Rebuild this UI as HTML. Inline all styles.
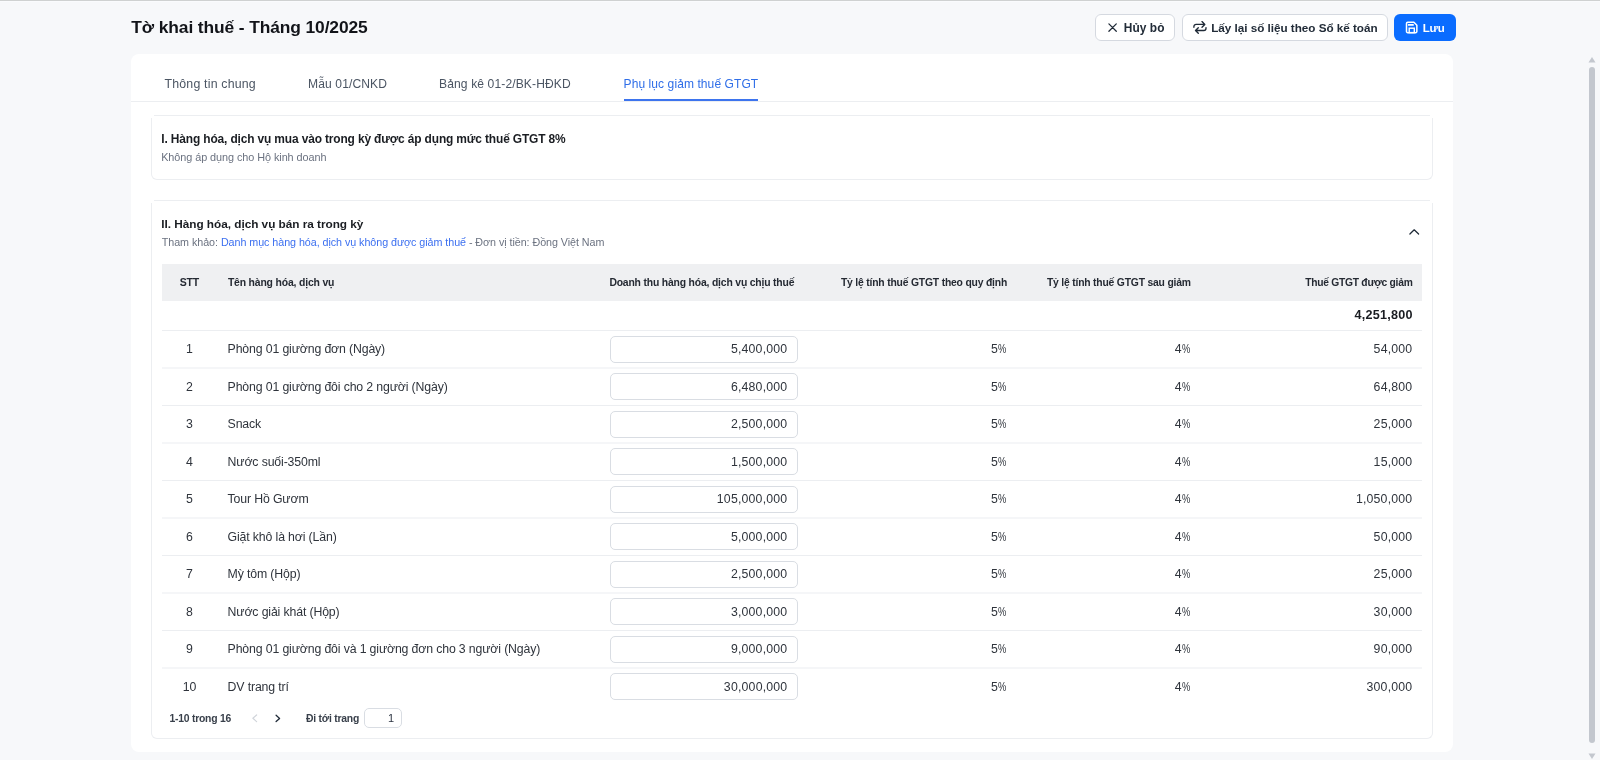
<!DOCTYPE html>
<html lang="vi"><head><meta charset="utf-8"><title>Tờ khai thuế - Tháng 10/2025</title>
<style>
html,body{margin:0;padding:0;}
body{width:1600px;height:760px;overflow:hidden;position:relative;background:#f7f8fa;will-change:transform;font-family:"Liberation Sans", sans-serif;}
</style></head><body>
<div style="position:absolute;left:0px;top:0px;width:1600px;height:1px;background:#cfd1d1;"></div>
<div style="position:absolute;left:0px;top:1px;width:1600px;height:1px;background:#fafbfd;"></div>
<div style="position:absolute;top:16px;left:131.33px;font-size:17.4px;line-height:23px;font-weight:700;color:#121419;white-space:nowrap;letter-spacing:-0.114px;">Tờ khai thuế - Tháng 10/2025</div>
<div style="position:absolute;left:1095px;top:14px;width:80px;height:27px;box-sizing:border-box;border:1px solid #d5d9e0;border-radius:6px;background:#fff;"></div>
<svg style="position:absolute;left:1107px;top:22px" width="11" height="11" viewBox="0 0 11 11"><path d="M1.9 1.9L9.3 9.3M9.3 1.9L1.9 9.3" stroke="#1f2a37" stroke-width="1.25" stroke-linecap="round"/></svg>
<div style="position:absolute;top:21px;left:1123.79px;font-size:11.91px;line-height:15px;font-weight:700;color:#222c38;white-space:nowrap;letter-spacing:0.063px;">Hủy bỏ</div>
<div style="position:absolute;left:1182px;top:14px;width:206px;height:27px;box-sizing:border-box;border:1px solid #d5d9e0;border-radius:6px;background:#fff;"></div>
<svg style="position:absolute;left:1190px;top:19px" width="20" height="17" viewBox="0 0 20 17"><path d="M3.9 8.3V7.6a2.2 2.2 0 0 1 2.2-2.2H14.6M12 2.6l2.8 2.8L12 8.2M16 8.6v0.7a2.2 2.2 0 0 1-2.2 2.2H5.6M8.3 8.7l-2.8 2.8 2.8 2.8" fill="none" stroke="#1f2a37" stroke-width="1.35" stroke-linecap="round" stroke-linejoin="round"/></svg>
<div style="position:absolute;top:20px;left:1211.20px;font-size:11.71px;line-height:15px;font-weight:700;color:#222c38;white-space:nowrap;letter-spacing:-0.024px;">Lấy lại số liệu theo Sổ kế toán</div>
<div style="position:absolute;left:1394px;top:14px;width:62px;height:27px;border-radius:6px;background:#0a6cff;"></div>
<svg style="position:absolute;left:1402px;top:18px" width="20" height="19" viewBox="0 0 20 19"><path d="M5.7 4.25H11.9L14.85 7.2V13.45a1.2 1.2 0 0 1-1.2 1.2H5.7a1.2 1.2 0 0 1-1.2-1.2V5.45a1.2 1.2 0 0 1 1.2-1.2z" fill="none" stroke="#fff" stroke-width="1.5" stroke-linejoin="round"/><rect x="5.9" y="5.9" width="5.9" height="1.9" rx="0.5" fill="#fff"/><rect x="7.2" y="10.2" width="5.1" height="4.4" fill="none" stroke="#fff" stroke-width="1.4"/></svg>
<div style="position:absolute;top:21px;left:1422.81px;font-size:11.47px;line-height:15px;font-weight:700;color:#ffffff;white-space:nowrap;letter-spacing:-0.188px;">Lưu</div>
<div style="position:absolute;left:131px;top:54px;width:1322px;height:698px;background:#fff;border-radius:8px;"></div>
<div style="position:absolute;top:76px;left:164.50px;font-size:12.35px;line-height:16px;font-weight:400;color:#4b5563;white-space:nowrap;letter-spacing:0.192px;">Thông tin chung</div>
<div style="position:absolute;top:76px;left:308.03px;font-size:12.07px;line-height:16px;font-weight:400;color:#4b5563;white-space:nowrap;letter-spacing:0.122px;">Mẫu 01/CNKD</div>
<div style="position:absolute;top:76px;left:439.03px;font-size:12.08px;line-height:16px;font-weight:400;color:#4b5563;white-space:nowrap;letter-spacing:0.113px;">Bảng kê 01-2/BK-HĐKD</div>
<div style="position:absolute;top:76px;left:623.54px;font-size:12.02px;line-height:16px;font-weight:400;color:#2f6ee8;white-space:nowrap;letter-spacing:0.084px;">Phụ lục giảm thuế GTGT</div>
<div style="position:absolute;left:131px;top:101px;width:1322px;height:1px;background:#eceef1;"></div>
<div style="position:absolute;left:624px;top:99px;width:134px;height:2px;background:#3d74ee;"></div>
<div style="position:absolute;left:151px;top:118px;width:1282px;height:62px;box-sizing:border-box;border:1px solid #eceef1;border-top:0;border-radius:0 0 6px 6px;"></div>
<div style="position:absolute;left:154px;top:115px;width:1276px;height:1px;background:#eceef1;"></div>
<div style="position:absolute;top:131px;left:161.28px;font-size:11.94px;line-height:16px;font-weight:700;color:#1a1d22;white-space:nowrap;letter-spacing:-0.142px;">I. Hàng hóa, dịch vụ mua vào trong kỳ được áp dụng mức thuế GTGT 8%</div>
<div style="position:absolute;top:150px;left:161.13px;font-size:10.87px;line-height:14px;font-weight:400;color:#6b7280;white-space:nowrap;letter-spacing:-0.063px;">Không áp dụng cho Hộ kinh doanh</div>
<div style="position:absolute;left:151px;top:203px;width:1282px;height:536px;box-sizing:border-box;border:1px solid #eceef1;border-top:0;border-radius:0 0 6px 6px;"></div>
<div style="position:absolute;left:154px;top:200px;width:1276px;height:1px;background:#eceef1;"></div>
<div style="position:absolute;top:217px;left:161.29px;font-size:11.81px;line-height:15px;font-weight:700;color:#1a1d22;white-space:nowrap;letter-spacing:-0.032px;">II. Hàng hóa, dịch vụ bán ra trong kỳ</div>
<div style="position:absolute;top:235px;left:161.79px;font-size:10.74px;line-height:14px;font-weight:400;color:#6b7280;white-space:nowrap;letter-spacing:-0.052px;">Tham khảo: <span style="color:#3b6ff0">Danh mục hàng hóa, dịch vụ không được giảm thuế</span> - Đơn vị tiền: Đồng Việt Nam</div>
<svg style="position:absolute;left:1408px;top:228px" width="12" height="8" viewBox="0 0 12 8"><path d="M1.9 6L6.2 1.8L10.6 6" fill="none" stroke="#1f2a37" stroke-width="1.25" stroke-linecap="round" stroke-linejoin="round"/></svg>
<div style="position:absolute;left:162px;top:264px;width:1260px;height:37px;background:#eff0f2;"></div>
<div style="position:absolute;top:275px;left:179.68px;font-size:10.52px;line-height:14px;font-weight:700;color:#252a33;white-space:nowrap;letter-spacing:-0.231px;">STT</div>
<div style="position:absolute;top:276px;left:227.90px;font-size:10.41px;line-height:14px;font-weight:700;color:#252a33;white-space:nowrap;letter-spacing:-0.167px;">Tên hàng hóa, dịch vụ</div>
<div style="position:absolute;top:276px;left:609.38px;font-size:10.39px;line-height:14px;font-weight:700;color:#252a33;white-space:nowrap;letter-spacing:-0.174px;">Doanh thu hàng hóa, dịch vụ chịu thuế</div>
<div style="position:absolute;top:276px;left:840.90px;font-size:10.35px;line-height:13px;font-weight:700;color:#252a33;white-space:nowrap;letter-spacing:-0.182px;">Tỷ lệ tính thuế GTGT theo quy định</div>
<div style="position:absolute;top:276px;left:1046.90px;font-size:10.35px;line-height:13px;font-weight:700;color:#252a33;white-space:nowrap;letter-spacing:-0.19px;">Tỷ lệ tính thuế GTGT sau giảm</div>
<div style="position:absolute;top:276px;left:1305.30px;font-size:10.26px;line-height:13px;font-weight:700;color:#252a33;white-space:nowrap;letter-spacing:-0.257px;">Thuế GTGT được giảm</div>
<div style="position:absolute;top:307px;left:1354.62px;font-size:12.6px;line-height:16px;font-weight:700;color:#1a1d22;white-space:nowrap;letter-spacing:0.226px;">4,251,800</div>
<div style="position:absolute;left:162px;top:330px;width:1260px;height:1px;background:#eceef1;"></div>
<div style="position:absolute;top:341px;left:-110.5px;width:600px;text-align:center;font-size:12.3px;line-height:16px;font-weight:400;color:#2f343c;white-space:nowrap;">1</div>
<div style="position:absolute;top:341px;left:227.6px;font-size:12.3px;line-height:16px;font-weight:400;color:#2f343c;white-space:nowrap;letter-spacing:-0.14px;">Phòng 01 giường đơn (Ngày)</div>
<div style="position:absolute;left:610px;top:336px;width:188px;height:27px;box-sizing:border-box;border:1px solid #d9dde3;border-radius:5px;background:#fff;"></div>
<div style="position:absolute;top:341px;right:812.60px;font-size:12.3px;line-height:16px;font-weight:400;color:#2f343c;white-space:nowrap;letter-spacing:0.2px;">5,400,000</div>
<div style="position:absolute;top:341px;left:991.0px;font-size:12.3px;line-height:16px;font-weight:400;color:#2f343c;white-space:nowrap;">5<span style="display:inline-block;transform:scaleX(.76);transform-origin:0 0;margin-left:0.6px">%</span></div>
<div style="position:absolute;top:341px;left:1174.7px;font-size:12.3px;line-height:16px;font-weight:400;color:#2f343c;white-space:nowrap;">4<span style="display:inline-block;transform:scaleX(.76);transform-origin:0 0;margin-left:0.6px">%</span></div>
<div style="position:absolute;top:341px;right:187.60px;font-size:12.3px;line-height:16px;font-weight:400;color:#2f343c;white-space:nowrap;letter-spacing:0.2px;">54,000</div>
<div style="position:absolute;left:162px;top:367px;width:1260px;height:2px;background:#f5f6f8;"></div>
<div style="position:absolute;top:379px;left:-110.5px;width:600px;text-align:center;font-size:12.3px;line-height:16px;font-weight:400;color:#2f343c;white-space:nowrap;">2</div>
<div style="position:absolute;top:379px;left:227.6px;font-size:12.3px;line-height:16px;font-weight:400;color:#2f343c;white-space:nowrap;letter-spacing:-0.14px;">Phòng 01 giường đôi cho 2 người (Ngày)</div>
<div style="position:absolute;left:610px;top:373px;width:188px;height:27px;box-sizing:border-box;border:1px solid #d9dde3;border-radius:5px;background:#fff;"></div>
<div style="position:absolute;top:379px;right:812.60px;font-size:12.3px;line-height:16px;font-weight:400;color:#2f343c;white-space:nowrap;letter-spacing:0.2px;">6,480,000</div>
<div style="position:absolute;top:379px;left:991.0px;font-size:12.3px;line-height:16px;font-weight:400;color:#2f343c;white-space:nowrap;">5<span style="display:inline-block;transform:scaleX(.76);transform-origin:0 0;margin-left:0.6px">%</span></div>
<div style="position:absolute;top:379px;left:1174.7px;font-size:12.3px;line-height:16px;font-weight:400;color:#2f343c;white-space:nowrap;">4<span style="display:inline-block;transform:scaleX(.76);transform-origin:0 0;margin-left:0.6px">%</span></div>
<div style="position:absolute;top:379px;right:187.60px;font-size:12.3px;line-height:16px;font-weight:400;color:#2f343c;white-space:nowrap;letter-spacing:0.2px;">64,800</div>
<div style="position:absolute;left:162px;top:405px;width:1260px;height:1px;background:#eceef1;"></div>
<div style="position:absolute;top:416px;left:-110.5px;width:600px;text-align:center;font-size:12.3px;line-height:16px;font-weight:400;color:#2f343c;white-space:nowrap;">3</div>
<div style="position:absolute;top:416px;left:227.6px;font-size:12.3px;line-height:16px;font-weight:400;color:#2f343c;white-space:nowrap;letter-spacing:-0.14px;">Snack</div>
<div style="position:absolute;left:610px;top:411px;width:188px;height:27px;box-sizing:border-box;border:1px solid #d9dde3;border-radius:5px;background:#fff;"></div>
<div style="position:absolute;top:416px;right:812.60px;font-size:12.3px;line-height:16px;font-weight:400;color:#2f343c;white-space:nowrap;letter-spacing:0.2px;">2,500,000</div>
<div style="position:absolute;top:416px;left:991.0px;font-size:12.3px;line-height:16px;font-weight:400;color:#2f343c;white-space:nowrap;">5<span style="display:inline-block;transform:scaleX(.76);transform-origin:0 0;margin-left:0.6px">%</span></div>
<div style="position:absolute;top:416px;left:1174.7px;font-size:12.3px;line-height:16px;font-weight:400;color:#2f343c;white-space:nowrap;">4<span style="display:inline-block;transform:scaleX(.76);transform-origin:0 0;margin-left:0.6px">%</span></div>
<div style="position:absolute;top:416px;right:187.60px;font-size:12.3px;line-height:16px;font-weight:400;color:#2f343c;white-space:nowrap;letter-spacing:0.2px;">25,000</div>
<div style="position:absolute;left:162px;top:442px;width:1260px;height:2px;background:#f5f6f8;"></div>
<div style="position:absolute;top:454px;left:-110.5px;width:600px;text-align:center;font-size:12.3px;line-height:16px;font-weight:400;color:#2f343c;white-space:nowrap;">4</div>
<div style="position:absolute;top:454px;left:227.6px;font-size:12.3px;line-height:16px;font-weight:400;color:#2f343c;white-space:nowrap;letter-spacing:-0.14px;">Nước suối-350ml</div>
<div style="position:absolute;left:610px;top:448px;width:188px;height:27px;box-sizing:border-box;border:1px solid #d9dde3;border-radius:5px;background:#fff;"></div>
<div style="position:absolute;top:454px;right:812.60px;font-size:12.3px;line-height:16px;font-weight:400;color:#2f343c;white-space:nowrap;letter-spacing:0.2px;">1,500,000</div>
<div style="position:absolute;top:454px;left:991.0px;font-size:12.3px;line-height:16px;font-weight:400;color:#2f343c;white-space:nowrap;">5<span style="display:inline-block;transform:scaleX(.76);transform-origin:0 0;margin-left:0.6px">%</span></div>
<div style="position:absolute;top:454px;left:1174.7px;font-size:12.3px;line-height:16px;font-weight:400;color:#2f343c;white-space:nowrap;">4<span style="display:inline-block;transform:scaleX(.76);transform-origin:0 0;margin-left:0.6px">%</span></div>
<div style="position:absolute;top:454px;right:187.60px;font-size:12.3px;line-height:16px;font-weight:400;color:#2f343c;white-space:nowrap;letter-spacing:0.2px;">15,000</div>
<div style="position:absolute;left:162px;top:480px;width:1260px;height:1px;background:#eceef1;"></div>
<div style="position:absolute;top:491px;left:-110.5px;width:600px;text-align:center;font-size:12.3px;line-height:16px;font-weight:400;color:#2f343c;white-space:nowrap;">5</div>
<div style="position:absolute;top:491px;left:227.6px;font-size:12.3px;line-height:16px;font-weight:400;color:#2f343c;white-space:nowrap;letter-spacing:-0.14px;">Tour Hồ Gươm</div>
<div style="position:absolute;left:610px;top:486px;width:188px;height:27px;box-sizing:border-box;border:1px solid #d9dde3;border-radius:5px;background:#fff;"></div>
<div style="position:absolute;top:491px;right:812.60px;font-size:12.3px;line-height:16px;font-weight:400;color:#2f343c;white-space:nowrap;letter-spacing:0.2px;">105,000,000</div>
<div style="position:absolute;top:491px;left:991.0px;font-size:12.3px;line-height:16px;font-weight:400;color:#2f343c;white-space:nowrap;">5<span style="display:inline-block;transform:scaleX(.76);transform-origin:0 0;margin-left:0.6px">%</span></div>
<div style="position:absolute;top:491px;left:1174.7px;font-size:12.3px;line-height:16px;font-weight:400;color:#2f343c;white-space:nowrap;">4<span style="display:inline-block;transform:scaleX(.76);transform-origin:0 0;margin-left:0.6px">%</span></div>
<div style="position:absolute;top:491px;right:187.60px;font-size:12.3px;line-height:16px;font-weight:400;color:#2f343c;white-space:nowrap;letter-spacing:0.2px;">1,050,000</div>
<div style="position:absolute;left:162px;top:517px;width:1260px;height:2px;background:#f5f6f8;"></div>
<div style="position:absolute;top:529px;left:-110.5px;width:600px;text-align:center;font-size:12.3px;line-height:16px;font-weight:400;color:#2f343c;white-space:nowrap;">6</div>
<div style="position:absolute;top:529px;left:227.6px;font-size:12.3px;line-height:16px;font-weight:400;color:#2f343c;white-space:nowrap;letter-spacing:-0.14px;">Giặt khô là hơi (Lần)</div>
<div style="position:absolute;left:610px;top:523px;width:188px;height:27px;box-sizing:border-box;border:1px solid #d9dde3;border-radius:5px;background:#fff;"></div>
<div style="position:absolute;top:529px;right:812.60px;font-size:12.3px;line-height:16px;font-weight:400;color:#2f343c;white-space:nowrap;letter-spacing:0.2px;">5,000,000</div>
<div style="position:absolute;top:529px;left:991.0px;font-size:12.3px;line-height:16px;font-weight:400;color:#2f343c;white-space:nowrap;">5<span style="display:inline-block;transform:scaleX(.76);transform-origin:0 0;margin-left:0.6px">%</span></div>
<div style="position:absolute;top:529px;left:1174.7px;font-size:12.3px;line-height:16px;font-weight:400;color:#2f343c;white-space:nowrap;">4<span style="display:inline-block;transform:scaleX(.76);transform-origin:0 0;margin-left:0.6px">%</span></div>
<div style="position:absolute;top:529px;right:187.60px;font-size:12.3px;line-height:16px;font-weight:400;color:#2f343c;white-space:nowrap;letter-spacing:0.2px;">50,000</div>
<div style="position:absolute;left:162px;top:555px;width:1260px;height:1px;background:#eceef1;"></div>
<div style="position:absolute;top:566px;left:-110.5px;width:600px;text-align:center;font-size:12.3px;line-height:16px;font-weight:400;color:#2f343c;white-space:nowrap;">7</div>
<div style="position:absolute;top:566px;left:227.6px;font-size:12.3px;line-height:16px;font-weight:400;color:#2f343c;white-space:nowrap;letter-spacing:-0.14px;">Mỳ tôm (Hộp)</div>
<div style="position:absolute;left:610px;top:561px;width:188px;height:27px;box-sizing:border-box;border:1px solid #d9dde3;border-radius:5px;background:#fff;"></div>
<div style="position:absolute;top:566px;right:812.60px;font-size:12.3px;line-height:16px;font-weight:400;color:#2f343c;white-space:nowrap;letter-spacing:0.2px;">2,500,000</div>
<div style="position:absolute;top:566px;left:991.0px;font-size:12.3px;line-height:16px;font-weight:400;color:#2f343c;white-space:nowrap;">5<span style="display:inline-block;transform:scaleX(.76);transform-origin:0 0;margin-left:0.6px">%</span></div>
<div style="position:absolute;top:566px;left:1174.7px;font-size:12.3px;line-height:16px;font-weight:400;color:#2f343c;white-space:nowrap;">4<span style="display:inline-block;transform:scaleX(.76);transform-origin:0 0;margin-left:0.6px">%</span></div>
<div style="position:absolute;top:566px;right:187.60px;font-size:12.3px;line-height:16px;font-weight:400;color:#2f343c;white-space:nowrap;letter-spacing:0.2px;">25,000</div>
<div style="position:absolute;left:162px;top:592px;width:1260px;height:2px;background:#f5f6f8;"></div>
<div style="position:absolute;top:604px;left:-110.5px;width:600px;text-align:center;font-size:12.3px;line-height:16px;font-weight:400;color:#2f343c;white-space:nowrap;">8</div>
<div style="position:absolute;top:604px;left:227.6px;font-size:12.3px;line-height:16px;font-weight:400;color:#2f343c;white-space:nowrap;letter-spacing:-0.14px;">Nước giải khát (Hộp)</div>
<div style="position:absolute;left:610px;top:598px;width:188px;height:27px;box-sizing:border-box;border:1px solid #d9dde3;border-radius:5px;background:#fff;"></div>
<div style="position:absolute;top:604px;right:812.60px;font-size:12.3px;line-height:16px;font-weight:400;color:#2f343c;white-space:nowrap;letter-spacing:0.2px;">3,000,000</div>
<div style="position:absolute;top:604px;left:991.0px;font-size:12.3px;line-height:16px;font-weight:400;color:#2f343c;white-space:nowrap;">5<span style="display:inline-block;transform:scaleX(.76);transform-origin:0 0;margin-left:0.6px">%</span></div>
<div style="position:absolute;top:604px;left:1174.7px;font-size:12.3px;line-height:16px;font-weight:400;color:#2f343c;white-space:nowrap;">4<span style="display:inline-block;transform:scaleX(.76);transform-origin:0 0;margin-left:0.6px">%</span></div>
<div style="position:absolute;top:604px;right:187.60px;font-size:12.3px;line-height:16px;font-weight:400;color:#2f343c;white-space:nowrap;letter-spacing:0.2px;">30,000</div>
<div style="position:absolute;left:162px;top:630px;width:1260px;height:1px;background:#eceef1;"></div>
<div style="position:absolute;top:641px;left:-110.5px;width:600px;text-align:center;font-size:12.3px;line-height:16px;font-weight:400;color:#2f343c;white-space:nowrap;">9</div>
<div style="position:absolute;top:641px;left:227.6px;font-size:12.3px;line-height:16px;font-weight:400;color:#2f343c;white-space:nowrap;letter-spacing:-0.14px;">Phòng 01 giường đôi và 1 giường đơn cho 3 người (Ngày)</div>
<div style="position:absolute;left:610px;top:636px;width:188px;height:27px;box-sizing:border-box;border:1px solid #d9dde3;border-radius:5px;background:#fff;"></div>
<div style="position:absolute;top:641px;right:812.60px;font-size:12.3px;line-height:16px;font-weight:400;color:#2f343c;white-space:nowrap;letter-spacing:0.2px;">9,000,000</div>
<div style="position:absolute;top:641px;left:991.0px;font-size:12.3px;line-height:16px;font-weight:400;color:#2f343c;white-space:nowrap;">5<span style="display:inline-block;transform:scaleX(.76);transform-origin:0 0;margin-left:0.6px">%</span></div>
<div style="position:absolute;top:641px;left:1174.7px;font-size:12.3px;line-height:16px;font-weight:400;color:#2f343c;white-space:nowrap;">4<span style="display:inline-block;transform:scaleX(.76);transform-origin:0 0;margin-left:0.6px">%</span></div>
<div style="position:absolute;top:641px;right:187.60px;font-size:12.3px;line-height:16px;font-weight:400;color:#2f343c;white-space:nowrap;letter-spacing:0.2px;">90,000</div>
<div style="position:absolute;left:162px;top:667px;width:1260px;height:2px;background:#f5f6f8;"></div>
<div style="position:absolute;top:679px;left:-110.5px;width:600px;text-align:center;font-size:12.3px;line-height:16px;font-weight:400;color:#2f343c;white-space:nowrap;">10</div>
<div style="position:absolute;top:679px;left:227.6px;font-size:12.3px;line-height:16px;font-weight:400;color:#2f343c;white-space:nowrap;letter-spacing:-0.14px;">DV trang trí</div>
<div style="position:absolute;left:610px;top:673px;width:188px;height:27px;box-sizing:border-box;border:1px solid #d9dde3;border-radius:5px;background:#fff;"></div>
<div style="position:absolute;top:679px;right:812.60px;font-size:12.3px;line-height:16px;font-weight:400;color:#2f343c;white-space:nowrap;letter-spacing:0.2px;">30,000,000</div>
<div style="position:absolute;top:679px;left:991.0px;font-size:12.3px;line-height:16px;font-weight:400;color:#2f343c;white-space:nowrap;">5<span style="display:inline-block;transform:scaleX(.76);transform-origin:0 0;margin-left:0.6px">%</span></div>
<div style="position:absolute;top:679px;left:1174.7px;font-size:12.3px;line-height:16px;font-weight:400;color:#2f343c;white-space:nowrap;">4<span style="display:inline-block;transform:scaleX(.76);transform-origin:0 0;margin-left:0.6px">%</span></div>
<div style="position:absolute;top:679px;right:187.60px;font-size:12.3px;line-height:16px;font-weight:400;color:#2f343c;white-space:nowrap;letter-spacing:0.2px;">300,000</div>
<div style="position:absolute;top:712px;left:169.38px;font-size:10.39px;line-height:14px;font-weight:700;color:#39404b;white-space:nowrap;letter-spacing:-0.224px;">1-10 trong 16</div>
<svg style="position:absolute;left:250px;top:713px" width="9" height="11" viewBox="0 0 9 11"><path d="M6.6 2.0L2.9 5.3L6.6 8.6" fill="none" stroke="#d0d4da" stroke-width="1.2" stroke-linecap="round" stroke-linejoin="round"/></svg>
<svg style="position:absolute;left:273px;top:713px" width="9" height="11" viewBox="0 0 9 11"><path d="M3.1 2.2L6.6 5.4L3.1 8.6" fill="none" stroke="#1f2a37" stroke-width="1.3" stroke-linecap="round" stroke-linejoin="round"/></svg>
<div style="position:absolute;top:712px;left:306.00px;font-size:10.36px;line-height:13px;font-weight:700;color:#39404b;white-space:nowrap;letter-spacing:-0.219px;">Đi tới trang</div>
<div style="position:absolute;left:364px;top:708px;width:38px;height:20px;box-sizing:border-box;border:1px solid #d9dde3;border-radius:5px;background:#fff;"></div>
<div style="position:absolute;top:711px;right:1205.80px;font-size:11px;line-height:14px;font-weight:400;color:#2b3340;white-space:nowrap;">1</div>
<svg style="position:absolute;left:1587px;top:56px" width="10" height="8" viewBox="0 0 10 8"><path d="M5 1L8.5 6.5h-7z" fill="#c3c7ce"/></svg>
<div style="position:absolute;left:1589px;top:67px;width:6px;height:676px;background:#c3c7ce;border-radius:3px;"></div>
<svg style="position:absolute;left:1587px;top:752px" width="10" height="8" viewBox="0 0 10 8"><path d="M5 7L8.5 1.5h-7z" fill="#c3c7ce"/></svg>
</body></html>
